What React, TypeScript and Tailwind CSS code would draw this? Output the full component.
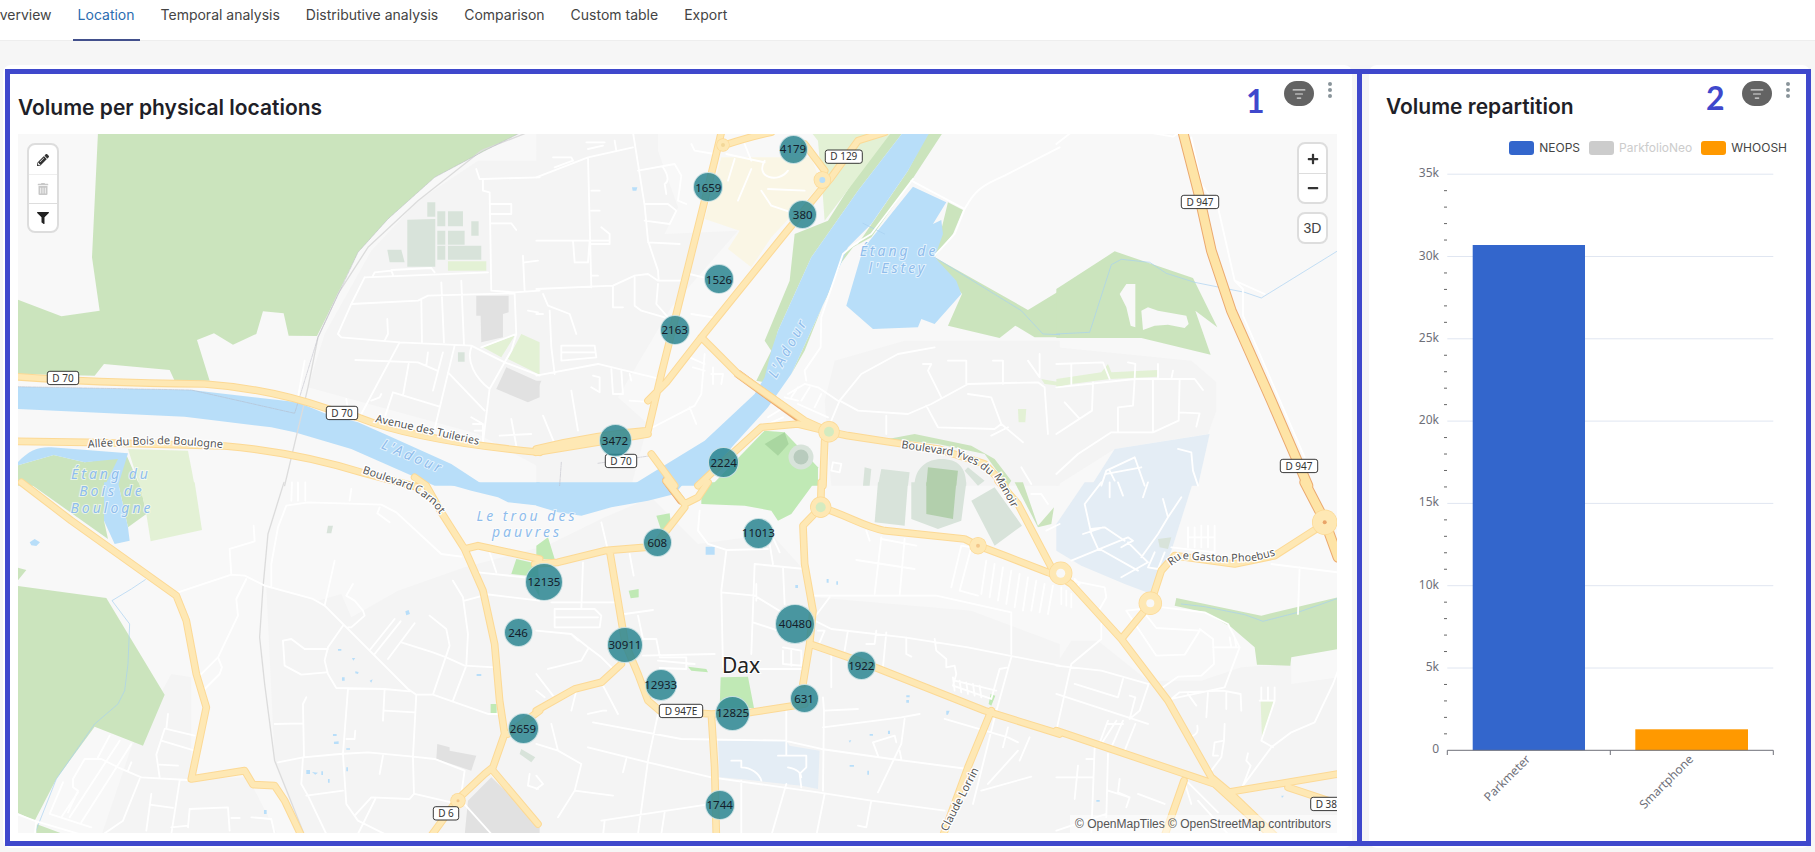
import type { SVGProps } from 'react'
import { ListFilter } from 'lucide-react'
import { FaFilter, FaMinus, FaPencilAlt, FaPlus, FaTrashAlt } from 'react-icons/fa'

// map shapes are traced in 3x tile coordinates, each tile has its page origin here
const TILES = {
  a: [18, 134],
  b: [538, 134],
  c: [1058, 134],
  d: [18, 484],
  e: [538, 484],
  f: [1058, 484],
} as const

type TileId = keyof typeof TILES
type Layer = { paint: SVGProps<SVGPathElement>; paths: Partial<Record<TileId, string>> }

const line = (stroke: string, strokeWidth: number): SVGProps<SVGPathElement> => ({
  fill: 'none',
  stroke,
  strokeWidth,
  strokeLinejoin: 'round',
  strokeLinecap: 'round',
})

const urban = {
  a: 'M1200,200 L1380,80 L1565,80 L1565,1000 L1380,900 L870,760 L920,600 L1060,350Z',
  b: 'M-5,-5 L360,-5 L360,50 L420,220 L380,300 L600,290 L400,520 L240,790 L330,870 L280,1055 L-5,1055Z M890,680 L1100,620 L1565,620 L1565,1055 L880,1055 L860,800Z',
  c: 'M-5,640 L400,680 L475,745 L475,830 L450,900 L170,945 L-5,1055Z',
  d: 'M745,310 L900,350 L970,330 L1000,400 L1140,320 L1340,250 L1565,190 L1565,1055 L860,1055 L770,830Z M460,570 L520,580 L520,885 L690,880 L780,1055 L250,1055 L340,790Z',
  e: 'M480,180 L700,150 L800,260 L830,340 L1300,380 L1565,480 L1565,1055 L-5,1055 L-5,200 L200,100 L340,40Z',
  f: 'M-5,540 L40,470 L120,470 L270,590 L430,590 L550,550 L700,540 L700,600 L840,580 L840,1055 L-5,1055Z',
}

const mainRoads = {
  a: 'M-5,728 C200,745 400,748 560,750 C700,760 830,790 930,825 L1020,850 C1120,890 1300,930 1565,955 M-5,922 L210,925 L620,936 C760,948 900,975 1040,1018 L1200,1060',
  b: 'M550,-5 L530,80 L410,560 L370,720 L330,890 C200,900 100,920 -5,945 M330,900 L-5,955 M340,960 L410,1055 M1040,-5 L960,20 L880,130 L740,300 L490,610 L385,745 L330,800 M555,35 C600,20 650,5 700,-5 M800,30 L860,110 M490,610 L600,720 L800,860 L873,893 L930,905 L1060,925 L1200,945 L1340,990 L1400,1055 M480,1055 L560,980 L670,880 L780,870 L873,893 M860,920 L855,1055',
  d: 'M10,-5 L160,110 L370,260 L475,335 L505,410 L535,570 L565,670 L520,885 L680,860 L705,902 L770,905 L800,950 L850,1055 M1190,-20 L1225,5 L1270,85 L1340,195 L1395,320 L1430,480 L1445,650 L1460,750 L1425,850 L1400,870 L1320,945 L1240,1055 M1340,195 L1380,185 L1565,225 M1470,750 L1565,680 M1425,860 L1560,1020',
  e: 'M-10,240 L60,235 L200,200 L320,190 L358,175 L440,70 M385,-10 L440,60 L480,40 L510,-5 M215,200 L245,380 L262,480 L300,570 L330,650 L365,680 L520,690 L640,685 L800,660 M520,690 L530,850 L535,1055 M850,-5 L848,70 L795,125 L800,240 L825,380 L815,480 L795,600 M815,480 L960,530 L1340,680 L1565,750 M848,70 C920,90 980,130 1040,140 L1280,165 L1320,185 L1400,215 L1530,265 L1565,280 M1380,-10 L1440,60 L1540,250 L1565,270 M1360,680 L1290,850 L1215,1055 M-5,680 L110,615 L190,595 L250,540',
  f: 'M510,925 L840,870 M690,910 L840,960 M-5,270 L40,300 L190,465 L330,650 L460,880 L520,930 L650,1055 M-5,740 L470,900 L640,1055 M378,890 L320,1055 M278,358 L190,465 M790,125 L650,215 L530,240 L350,215 L310,260 L278,358',
}

const trunk = {
  c: 'M375,-5 L420,170 L460,350 L520,530 L640,800 L750,1055',
  f: 'M740,-5 L800,110 L840,220',
}

const layers: Layer[] = [
  { paint: { fill: '#f4f4f4' }, paths: urban },
  {
    paint: { fill: '#faf6e5' },
    paths: { b: 'M550,70 L820,70 L850,150 L700,310 L640,400 L570,345 L605,290 L500,255Z' },
  },
  {
    paint: { fill: '#e4edf5' },
    paths: {
      c: 'M100,1055 L170,945 L455,900 L420,1055Z',
      e: 'M540,770 L745,770 L755,785 L845,800 L840,915 L790,905 L605,885 L545,880Z',
      f: 'M-5,120 L80,-5 L405,-5 L340,200 L280,330 L200,300 L70,245 L-5,200Z',
    },
  },
  // woods and grass
  {
    paint: { fill: '#cbe4bd' },
    paths: {
      a: 'M240,-5 L222,370 L245,530 L130,547 L-5,495 L-5,720 L230,725 L258,690 L455,708 L470,740 L575,740 L537,618 L588,598 L645,632 L715,600 L735,532 L797,538 L812,605 L897,606 L930,540 L1020,355 L1110,255 L1250,130 L1400,50 L1510,-5Z M-5,995 L107,963 L200,985 L327,967 L365,1055 L-5,1055Z',
      b: 'M1060,-5 L1020,25 L870,260 L770,300 L755,440 L680,620 L700,650 L655,740 L680,745 L720,590 L770,480 L820,370 L960,170 L1095,-5Z M1215,-5 L1170,-5 L1110,110 L960,330 L920,350 L870,480 L760,720 L720,790 L800,650 L900,400 L945,340 L1000,310 L1120,140Z M1230,205 L1275,228 L1245,300 L1190,370 L1470,528 L1565,470 L1565,610 L1490,610 L1432,575 L1385,612 L1230,575 L1272,480 L1190,370Z M1050,915 L1130,900 L1300,935 L1370,975 L1420,1040 L1410,1055 L1340,960 L1200,930Z',
      c: 'M-5,465 L170,352 L405,432 L478,580 L412,530 L458,662 L250,612 L-5,612Z',
      d: 'M-5,305 L265,342 L440,632 L375,785 L230,728 L115,885 L50,1010 L-5,985Z M-5,250 L25,258 L-5,295Z M30,-5 L270,165 L258,110 L260,-5Z M300,-5 L365,-5 L385,90 L330,130Z M55,1020 L135,1050 L55,1055Z',
      e: 'M1430,-5 L1500,130 L1540,120 L1548,70 L1500,125 L1455,-5Z',
      f: 'M355,342 L610,395 L840,340 L840,495 L700,520 L697,545 L597,542 L590,490 L520,430 L440,385 L350,365Z',
    },
  },
  {
    paint: { fill: '#f8f8f8' },
    paths: {
      c: 'M185,480 L205,450 L232,450 L232,580 L218,575 L205,520Z M250,530 L270,520 L300,530 L385,545 L392,570 L380,582 L330,572 L290,575 L255,588Z',
    },
  },
  {
    paint: { fill: '#e3f1d5' },
    paths: {
      a: 'M330,945 L510,950 L530,1055 L365,1055Z M1290,382 L1405,382 L1405,410 L1290,410Z M1395,640 L1490,605 L1450,670Z M1510,600 L1565,625 L1565,722 L1470,675Z',
      b: 'M820,-5 L1060,-5 L860,260 L855,190 L840,20Z M1510,735 L1565,745 L1565,755 L1520,750Z M1440,825 L1465,825 L1462,865 L1442,865Z',
      c: 'M-5,735 L130,715 L150,690 L160,715 L300,708 L300,728 L155,735 L40,750 L-5,760Z',
      d: 'M365,-5 L530,-5 L552,138 L398,172 L385,90Z',
      f: 'M608,652 L648,652 L612,765Z',
    },
  },
  {
    paint: { fill: '#c0e9b5' },
    paths: {
      b: 'M520,1055 L680,890 L740,895 L840,1000 L840,1055Z',
      d: 'M1480,270 L1495,225 L1560,240 L1565,340 L1530,275Z M1418,660 L1436,660 L1436,688 L1418,688Z',
      e: 'M490,30 L520,-5 L830,-5 L760,90 L720,110 L700,80 L620,65 L490,60Z M-5,225 L-5,185 L30,160 L50,225Z M355,95 L395,88 L400,130 L370,140Z M272,320 L302,315 L302,340 L278,343Z M450,548 L505,555 L510,565 L460,560Z M548,580 L630,578 L648,672 L545,672Z M1358,630 L1372,635 L1360,665 L1352,660Z',
    },
  },
  {
    paint: { fill: '#a9d6a0' },
    paths: { b: 'M680,930 L740,895 L752,930 L720,965Z' },
  },
  // river and ponds
  {
    paint: { fill: '#b8def9' },
    paths: {
      a: 'M-5,758 L520,768 L840,805 L925,840 L1020,865 L1100,900 L1300,990 L1400,1055 L1250,1055 L1000,945 L830,895 L760,880 L500,848 L-5,825Z M-5,990 C30,950 60,938 100,940 L330,958 L300,1055 L260,1055 L300,975 L200,985 L107,963 L-5,995Z',
      b: 'M1095,-5 L960,170 L820,370 L770,480 L720,590 L700,650 L680,730 L650,780 L500,920 L370,1000 L280,1055 L480,1055 L590,930 L690,820 L760,720 L870,480 L930,340 L1000,270 L1110,110 L1175,-5Z M1125,158 L1225,205 L1185,270 L1210,258 L1215,300 L1190,370 L1255,440 L1270,480 L1190,570 L1150,555 L1140,580 L1005,585 L925,515 L975,345Z M282,160 L298,160 L295,170 L284,170Z',
      d: 'M1270,-5 L1360,20 L1440,40 L1470,55 L1565,65 L1565,-5Z M258,-5 L258,110 L290,180 L335,170 L330,130 L300,-5Z M35,175 L50,165 L66,175 L55,186 L40,184Z M1162,382 L1172,378 L1176,390 L1165,394Z M1376,570 L1390,570 L1390,576 L1376,576Z M945,750 L956,750 L956,756 L945,756Z M948,773 L962,772 L962,780 L948,780Z M985,793 L996,793 L996,797 L985,797Z M865,858 L876,858 L876,870 L865,870Z M882,864 L900,866 L892,872Z M910,862 L915,862 L915,873 L910,873Z M930,885 L935,885 L935,896 L930,896Z M985,850 L990,850 L990,862 L985,862Z M960,495 L970,495 L970,500 L960,500Z M1002,522 L1012,522 L1006,530 Z M1012,562 L1022,564 L1020,570 L1012,568Z M972,580 L980,580 L980,590 L972,590Z M1055,590 L1064,586 L1060,596Z M738,978 L746,978 L746,990 L738,990Z',
      e: 'M-5,-5 L-5,65 L60,85 L130,95 L220,70 L330,50 L410,30 L440,-5Z M503,188 L530,188 L530,212 L503,212Z M772,303 L780,303 L780,312 L772,312Z M866,285 L872,285 L872,296 L866,296Z M895,292 L900,292 L900,302 L895,302Z M1105,634 L1115,634 L1115,640 L1105,640Z M1105,648 L1113,648 L1113,656 L1105,656Z M1225,680 L1235,680 L1230,692 L1225,692Z M995,750 L1005,750 L1005,755 L995,755Z M1050,740 L1056,740 L1056,750 L1050,750Z M932,770 L940,768 L936,776Z M935,843 L948,843 L948,848 L935,848Z M988,860 L993,860 L993,872 L988,872Z',
      f: 'M115,948 L125,948 L125,953 L115,953Z M670,935 L678,935 L672,942Z',
    },
  },
  // buildings
  {
    paint: { fill: '#d8e3da' },
    paths: {
      a: 'M1168,257 L1252,255 L1252,398 L1168,398Z M1228,205 L1252,205 L1252,248 L1228,248Z M1258,232 L1282,232 L1282,277 L1258,277Z M1290,232 L1335,232 L1335,277 L1290,277Z M1258,290 L1282,290 L1282,332 L1258,332Z M1258,335 L1282,335 L1282,377 L1258,377Z M1290,290 L1340,290 L1340,332 L1290,332Z M1290,335 L1390,335 L1390,377 L1290,377Z M1360,262 L1382,262 L1382,305 L1360,305Z M1108,347 L1150,347 L1160,385 L1115,385Z M1320,655 L1340,655 L1340,683 L1320,683Z',
      b: 'M1030,1005 L1115,1015 L1110,1055 L1020,1055Z M980,1000 L1000,1005 L995,1055 L975,1055Z M1130,1055 C1130,1000 1170,975 1210,975 C1260,975 1285,1000 1285,1055Z M1290,1000 L1340,1040 L1320,1055 L1280,1010Z',
      d: 'M930,125 L945,125 L940,148 L926,148Z M1510,795 L1552,820 L1540,835 L1505,810Z M1365,950 L1400,960 L1375,1005 L1352,995Z M1430,935 L1448,945 L1418,1005 L1402,1000Z',
      e: 'M1020,-5 L1110,-5 L1100,125 L1010,115Z M1120,-5 L1285,-5 L1270,110 L1200,135 L1120,105Z M1300,50 L1370,10 L1452,125 L1370,185Z',
      f: 'M300,165 L340,160 L330,195 L305,190Z',
    },
  },
  {
    paint: { fill: '#b2cfac' },
    paths: {
      b: 'M1170,1000 L1260,1010 L1255,1055 L1165,1055Z',
      e: 'M1165,-5 L1255,-5 L1245,105 L1165,90Z',
    },
  },
  {
    paint: { fill: '#e1e1e1' },
    paths: {
      a: 'M1375,485 L1472,485 L1472,535 L1455,540 L1455,610 L1390,625 L1388,545 L1375,545Z M1465,700 L1565,745 L1565,790 L1530,805 L1435,765Z',
      b: 'M-5,740 L10,740 L-5,775Z',
      d: 'M1258,780 L1295,790 L1295,800 L1375,815 L1360,860 L1255,825Z M1350,950 L1420,880 L1565,1020 L1565,1055 L1340,1055Z',
    },
  },
  // railway
  {
    paint: line('#dcdcdc', 4),
    paths: {
      a: 'M800,1055 L870,760 L900,610 L960,480 L1050,340 L1200,200 L1390,50 L1530,-5',
      d: 'M798,-5 L750,150 L735,310 L725,460 L740,600 L770,830 L860,1055',
    },
  },
  {
    paint: { ...line('#b4b5c0', 1.5), strokeDasharray: '9 3 2 3' },
    paths: {
      a: 'M-5,758 L520,768 L830,838 L900,610 L1020,355 L1110,255 L1250,130 L1400,50 L1510,-5',
      b: 'M70,985 L65,1055 M180,988 L340,965',
    },
  },
  // streams
  {
    paint: line('#a8d0f2', 2),
    paths: {
      b: 'M975,268 L1040,300 M1190,370 L1450,530 L1515,600 L1565,602',
      c: 'M-5,600 L95,595 L160,392 L190,376 L275,385 L325,418 L410,445 L560,475 L610,492 L840,350',
      d: 'M382,287 L340,315 L282,350 L335,420 L330,540 L320,620 L300,660 L230,720 L115,885 L50,1050',
      f: 'M370,360 L440,368 L560,392 L615,412 L720,385 L840,343',
    },
  },
  // minor streets
  {
    paint: line('#ffffff', 5.5),
    paths: {
      a: 'M1375,105 L1385,135 L1395,135 L1565,130 M1395,135 L1395,170 L1415,175 L1420,470 L1490,475 L1565,470 M1415,210 L1480,210 L1480,240 L1415,240 M1420,268 L1480,268 L1495,288 M1040,430 L1410,415 M1040,430 L1000,510 L1200,500 L1230,485 L1490,478 M1000,510 L960,600 L970,610 L1145,625 L1360,635 L1460,685 M1210,495 L1212,625 M1270,445 L1278,625 M1330,440 L1338,630 M1108,555 L1110,600 L1100,620 M1145,625 L1030,840 M1012,678 L1200,685 L1258,710 M1172,690 L1155,785 M1125,775 L1265,818 M1125,775 L1102,845 M1230,655 L1225,695 M1275,655 L1245,770 M1310,635 L1250,885 M1290,715 L1400,830 M1360,640 C1345,680 1370,730 1415,765 L1395,925 M1460,685 L1415,765 M1490,480 L1495,600 L1480,650 L1460,685 M1495,600 L1390,640 M1460,685 L1565,725 M1480,855 L1495,935 M1445,905 L1540,900 M1360,850 L1395,870 L1395,920 M1365,870 L1395,870 M1370,890 L1395,890 M1065,425 L1070,415 L1120,410 L1125,422 M1120,408 L1240,402 L1250,415 M1515,365 L1520,470 M1520,385 L1560,380 M1530,530 L1560,535 M840,790 L860,680 M1060,800 L1085,790 L1090,780 M985,795 L988,815',
      b: 'M-5,130 L150,70 L285,40 M45,70 L100,70 L105,80 L50,100 M150,70 L160,460 M145,25 L200,25 M150,45 L195,35 M230,20 L235,50 M285,-5 L320,215 L330,320 L360,410 L362,440 M160,170 L185,170 M160,230 L185,230 M160,425 L180,425 M320,210 L390,210 L415,230 L395,270 L320,260 M330,325 L425,330 M300,110 L410,90 L430,125 L420,200 L445,210 M375,100 C395,130 390,145 380,150 L385,180 M-5,320 L215,320 M105,320 L110,385 L150,385 L155,320 M190,280 L215,300 L215,330 L160,330 M-5,465 L225,455 L290,425 L330,420 L360,440 L435,440 M290,430 L290,515 L310,530 L380,550 M360,450 L355,510 L390,550 M225,455 L225,520 L255,520 M15,480 L30,515 L95,540 L115,600 M35,530 L40,640 L50,720 M-5,540 L15,540 M70,635 L170,635 L175,670 L70,680Z M70,655 L170,655 M-5,725 L180,690 L365,735 M165,725 L185,730 L185,775 L160,760 M220,705 L225,780 L255,780 L250,710 M275,720 L280,740 M100,770 L120,890 M15,845 L50,930 M275,800 L345,805 M345,880 L470,815 L490,780 L500,660 M455,820 L475,870 M460,540 L525,550 M455,420 L495,430 M455,670 L500,690 M465,700 L500,710 M520,720 L555,720 L550,750 M525,700 L525,750 M1120,140 L1280,225 C1310,170 1330,155 1400,125 L1565,40 M1280,225 L1250,300 L1190,365 M1125,135 L1000,300 L950,330 L915,360 L850,550 L848,640 L800,710 L805,740 M750,780 L800,750 L840,760 L900,800 M740,790 L780,800 M780,760 L760,790 M815,760 L790,800 M850,780 L830,820 M780,810 L870,850 M690,850 L730,825 M690,870 L735,850 M905,800 L880,860 M905,800 L970,720 L1080,660 L1190,640 M905,800 L960,830 L1110,840 L1180,810 L1290,750 L1500,745 L1520,760 L1530,900 M1155,690 L1180,690 L1170,710 L1210,790 M1230,680 L1285,680 L1285,750 M1365,680 L1395,680 L1395,750 M1470,680 L1505,730 L1505,660 M1165,815 L1200,880 L1370,885 L1390,870 L1360,790 L1290,780 M1390,870 L1455,925 M1360,905 L1410,880 M1045,845 L1045,900 M885,985 L910,990 L905,1015 L880,1010Z M1450,1000 L1480,1050 M460,30 L470,50 L530,60 M620,30 L640,80 M590,75 L570,140 M640,105 L600,200 M670,170 L700,215 L760,235 M690,165 L800,170 M680,80 C650,130 720,150 750,110 M565,60 L680,85',
      c: 'M-5,30 L40,-5 M270,-5 L345,8 L365,-5 M400,10 L430,150 L480,220 L530,440 L555,465 L555,545 L740,970 M530,440 L620,480 M-5,760 L230,735 L410,735 L435,768 M40,690 L40,750 M-5,690 L135,685 L155,735 M210,685 L232,690 L230,735 L225,815 L180,820 L180,895 M285,735 L285,895 M300,690 L300,730 M345,710 L340,735 M365,735 L362,860 L285,895 L160,895 L60,960 L-5,1020 M362,835 L425,838 L415,878 M105,745 L102,830 L-5,900 M65,855 L20,805 M130,1055 L145,1010 L230,970 L260,1055 M360,945 L400,955 L405,1010 L420,1055 M155,1010 L170,1040 M145,1020 L250,1000',
      d: 'M480,325 L640,272 L680,275 L740,305 L885,345 L920,365 L1170,615 L1195,632 L1245,632 L1410,690 L1440,690 M640,272 L635,195 L710,172 L707,125 M685,285 L655,345 L660,395 L600,520 L545,575 M600,520 L612,550 L605,570 L560,615 M760,305 L760,240 L780,130 L805,65 L870,55 L1090,62 L1135,85 L1270,210 L1330,218 M820,50 L822,-5 M862,50 L862,-5 M840,50 L840,-5 M995,50 L1000,15 M1085,70 L1078,88 L1115,115 M950,230 L920,365 M1005,300 L985,335 L1010,350 L1035,380 L1040,395 L1000,430 L990,430 M975,425 L930,490 L920,530 L930,570 L955,612 L1100,615 L1175,622 M930,495 L860,495 L820,465 L795,470 L800,545 L850,572 L925,565 M1130,405 L1058,495 M1148,412 L1070,510 M1190,418 L1110,525 M1150,475 L1245,505 L1285,520 L1340,545 L1430,550 M1235,395 L1285,435 L1295,485 L1245,632 M1305,290 L1335,340 L1350,450 L1345,545 L1305,650 M1395,335 L1340,350 M1400,330 L1565,350 M1380,265 L1565,285 M1415,205 L1435,265 M1100,615 L1095,710 M1100,680 L1190,685 M1195,632 L1185,820 L1188,930 L1175,945 L1060,940 L1010,995 M865,640 L855,660 L858,820 M770,720 L855,718 M780,835 L855,820 L965,810 L1050,805 L1185,818 L1250,825 L1340,860 L1330,930 M990,615 L975,810 L985,960 L1020,1010 L1110,1055 M975,920 L865,935 M855,820 L850,900 L870,935 L925,1050 M1095,815 L1085,870 M985,765 L1010,765 L1012,740 M1190,930 L1300,955 M1072,945 L1020,1050 M450,690 L445,735 L530,755 M440,735 L415,812 L425,880 M430,770 L530,800 M425,842 L480,845 M370,880 L510,888 M485,890 L460,1050 M365,885 L315,1010 L250,1055 M400,930 L385,1040 M395,962 L465,972 M510,1030 L515,975 L630,970 L635,1040 M460,1030 L510,1025 M640,1002 L665,1002 M700,1000 L760,1005 L770,1050 M370,880 L300,850 L250,825 L200,825 L165,885 L165,910 L180,920 L150,985 M275,755 L240,820 M305,770 L155,1000 M340,780 L190,1015 M135,895 L95,990 L220,1030 M340,835 L330,860 M180,925 L130,1000 M-5,990 L55,1012 L200,1055 M55,1012 L50,1055 M1420,870 L1560,1020 M1535,870 L1530,905 L1560,915 M1330,950 L1420,1050',
      e: 'M190,115 L210,200 M275,210 L287,275 M135,235 L130,375 M40,355 L230,355 M50,375 L170,375 L190,395 L185,430 L50,430Z M50,400 L180,400 M-5,440 L100,450 L150,490 L190,520 L230,560 M100,450 L120,470 M150,495 L130,530 L30,555 M260,390 L345,378 M300,395 L315,465 L355,465 L365,515 M315,515 L530,510 M365,520 L445,520 L445,555 L365,552 M470,540 L360,530 M-5,570 L45,635 M-5,620 L20,640 M190,595 L240,690 M150,690 L195,680 L205,680 M115,620 L100,680 M165,715 L430,765 L740,770 L850,795 L1060,825 L1290,855 M360,690 L330,830 L300,1050 M150,790 L330,835 L520,880 L840,925 L1000,950 L1220,980 M265,825 L255,865 M130,840 L110,920 L225,935 M110,920 L60,1000 M-5,875 L15,900 L-5,915 M-5,780 L60,800 L130,840 M40,720 L60,800 M190,1010 L520,960 M380,985 L370,1050 M200,1010 L195,1055 M610,890 L610,1050 M745,900 L700,1055 M860,930 L835,1055 M1000,950 L985,1030 L960,1025 M565,200 L550,320 L555,550 M550,325 L650,335 L740,390 M650,240 L640,510 M650,240 L800,255 M735,250 L740,360 M645,415 L720,440 M700,150 L725,205 M695,180 L705,240 M485,80 L480,140 L510,180 L565,198 L690,195 M655,300 L655,350 M830,335 L1195,335 L1420,385 L1420,510 M875,340 L830,400 M830,410 L880,435 L1100,460 L1290,490 L1565,545 M735,500 L735,540 L790,545 L790,500 L735,490 M760,500 L760,545 M660,555 L790,555 M840,440 L860,440 L845,475 M930,440 L920,500 M1015,440 L1010,480 L985,480 M1045,445 L1035,550 M880,510 L880,610 M1105,460 L1105,510 L1120,518 M1190,465 L1195,500 L1225,525 L1225,550 L1250,545 L1255,570 L1245,605 L1360,645 L1385,555 L1410,550 M1250,590 L1375,620 M1030,160 L1010,330 M1100,165 L1085,335 M1030,165 L1135,185 M955,228 L1130,255 M985,140 L995,170 M855,640 L858,680 L855,920 M860,680 L960,675 M855,730 L1090,700 L1145,690 M1100,705 L1090,780 L1020,925 M1005,775 L1070,755 L1075,775 M1005,775 L1020,815 M1085,800 L1090,825 M745,680 L745,770 M1345,230 L1330,330 M1370,240 L1355,340 M1395,250 L1380,350 M1420,260 L1405,360 M1445,270 L1430,370 M1470,280 L1455,380 M1495,290 L1480,380 M1520,300 L1505,385 M1545,305 L1530,390 M1240,310 L1270,185 L1300,190 L1265,320 L1320,335 M1420,520 L1370,700 L1305,960 M1220,705 L1410,760 L1440,775 M1410,730 L1395,790 M1475,760 L1445,830 M1330,920 L1480,878 M1440,800 L1350,900 M580,830 L610,830 L610,850 C640,850 665,870 670,890 M720,815 L805,815 L805,850 L785,870 L790,910 M750,850 C780,855 790,870 790,880 M745,775 L745,815 M1480,30 L1510,30 L1530,60 M1525,140 L1565,120 M1245,580 L1250,620 M1265,590 L1270,625 M1285,595 L1290,630 M1305,600 L1310,635 M1325,605 L1330,640',
      f: 'M40,290 L140,310 L145,340 L125,375 M50,285 L65,300 L50,310 M10,310 L10,360 M25,320 L25,365 M40,330 L40,370 M130,420 L130,465 L40,540 L-5,740 M-5,545 L130,560 L270,600 M50,600 L180,640 L195,585 M-5,630 L270,720 M215,635 L232,640 L215,705 L245,680 M272,600 L245,680 M205,380 L250,375 M205,380 L295,515 L380,512 L425,440 L295,432 L250,375 M425,435 L465,465 L468,540 L430,575 L360,578 L315,610 M315,370 L440,385 L510,420 L545,490 L500,610 L340,645 L365,625 L495,620 L548,630 L550,680 M390,630 L415,665 M450,625 L445,700 M505,625 L505,675 M465,490 L545,490 M515,460 L520,490 M530,460 L535,490 M400,758 C420,750 420,740 418,725 M500,720 L498,770 L470,775 L465,815 L480,815 M498,770 L490,820 L460,860 M570,808 L565,830 L578,845 L555,905 L640,790 L700,745 L770,715 L825,600 L840,560 M610,770 L650,650 L605,650 M610,650 L610,610 M630,650 L630,610 M650,650 L650,610 M610,770 L645,790 M150,720 L195,720 M175,710 L130,780 M195,710 L160,790 M232,720 L200,800 M150,710 L120,790 M110,790 L100,1050 M150,810 L145,1000 M85,825 L105,825 M60,845 L50,945 M-5,880 L105,880 M185,885 L180,925 L215,940 L205,970 M150,920 L215,940 M240,930 L320,960 M145,990 L-5,1040 M640,240 L840,265 M725,250 L720,390 M390,130 L390,190 M410,130 L410,190 M430,125 L430,190 M450,125 L450,190 M470,125 L470,205 M390,160 L470,160 M340,190 L470,205 M380,895 L400,960 M390,895 L480,985 M130,-5 L80,60 L100,150 L120,195 M100,135 L140,130 L200,170 M75,150 L135,130 M40,230 L210,160 L225,170 L190,190 M210,175 L270,235 L190,280 M125,195 L240,260 M155,-5 L155,40 M180,-5 L195,35 M270,-5 L255,40 M315,45 L330,100 L370,40 M330,100 L300,150 L250,220 M290,205 L270,250 L300,255 L320,205 M420,950 L510,1050',
    },
  },
  // main roads: orange edge of the trunk road and bridges, then casing, then fill
  {
    paint: line('#eba96f', 32),
    paths: {
      ...trunk,
    },
  },
  {
    paint: line('#eba96f', 25),
    paths: {
      b: 'M600,720 L780,850',
      e: 'M385,-10 L430,50',
    },
  },
  { paint: line('#fcd995', 23), paths: mainRoads },
  { paint: line('#fee8b4', 17), paths: mainRoads },
  { paint: line('#fee4a6', 26), paths: trunk },
]

// page coordinates from here on
const rings = [
  { x: 820.7, y: 507.3, r: 10, hole: 5, fill: '#d4ebc0' },
  { x: 978, y: 545.7, r: 8, hole: 2, fill: '#f3c78b' },
  { x: 829, y: 431.7, r: 10, hole: 5, fill: '#d4ebc0' },
  { x: 822.3, y: 180, r: 8, hole: 3, fill: '#b8def9' },
  { x: 723, y: 145, r: 6, hole: 2, fill: '#f3d798' },
  { x: 1060.7, y: 573.3, r: 11, hole: 4.5, fill: '#f8f8f8' },
  { x: 1150.3, y: 603.3, r: 11, hole: 4, fill: '#f8f8f8' },
  { x: 1324.7, y: 522.3, r: 12, hole: 2, fill: '#e9a468' },
  { x: 458, y: 800.7, r: 7, hole: 1.5, fill: '#f3c78b' },
]

const shields = [
  { label: 'D 129', x: 825.3, y: 150, w: 37 },
  { label: 'D 947', x: 1181.3, y: 195.3, w: 37.4 },
  { label: 'D 947', x: 1280.3, y: 459.3, w: 37.4 },
  { label: 'D 70', x: 47.3, y: 371.3, w: 31.4 },
  { label: 'D 70', x: 326.3, y: 406.3, w: 31.4 },
  { label: 'D 70', x: 605.3, y: 454.3, w: 31.4 },
  { label: 'D 947E', x: 659.3, y: 704.3, w: 43.4 },
  { label: 'D 6', x: 433.3, y: 806.7, w: 25.4 },
  { label: 'D 38', x: 1310.7, y: 797.3, w: 31.4 },
]

const roadLabels = [
  { id: 'r1', label: 'Allée du Bois de Boulogne', d: 'M88,448 L130,445 L170,444 L225,448' },
  { id: 'r2', label: 'Avenue des Tuileries', d: 'M375,422 L483,446' },
  { id: 'r3', label: 'Boulevard Carnot', d: 'M362,473 L400,486 L418,493 L432,504 L446,522' },
  { id: 'r4', label: 'Boulevard Yves du Manoir', d: 'M901,448 L955,456 L978,466 L996,480 L1010,504 L1022,530' },
  { id: 'r5', label: 'Rue Gaston Phoebus', d: 'M1171,566 L1181,559 L1225,562 L1255,561 L1285,553' },
  { id: 'r6', label: 'Claude Lorrin', d: 'M947,832 L984,760' },
]

const waterLabels = [
  { label: 'Étang du', x: 111, y: 479 },
  { label: 'Bois de', x: 112, y: 496 },
  { label: 'Boulogne', x: 112, y: 513 },
  { label: 'Le trou des', x: 527, y: 521 },
  { label: 'pauvres', x: 527, y: 537 },
  { label: 'Étang de', x: 899, y: 256 },
  { label: "l'Estey", x: 898, y: 273 },
]

const markers = [
  { n: 4179, x: 793, y: 149, r: 14.5 },
  { n: 1659, x: 708.3, y: 187.3, r: 15 },
  { n: 380, x: 802.7, y: 214.3, r: 14.5 },
  { n: 1526, x: 719, y: 279.3, r: 15 },
  { n: 2163, x: 674.7, y: 329.7, r: 15 },
  { n: 3472, x: 615, y: 440.3, r: 16.5 },
  { n: 2224, x: 723.7, y: 462.3, r: 15.5 },
  { n: 608, x: 657.3, y: 542.3, r: 14.5 },
  { n: 11013, x: 758.3, y: 533, r: 15.5 },
  { n: 12135, x: 544, y: 581.7, r: 19 },
  { n: 246, x: 518, y: 632.3, r: 14.5 },
  { n: 30911, x: 625, y: 644.7, r: 18 },
  { n: 40480, x: 795.3, y: 624, r: 20 },
  { n: 1922, x: 861.3, y: 665.3, r: 14.5 },
  { n: 12933, x: 660.7, y: 685, r: 16 },
  { n: 631, x: 804, y: 698.3, r: 14.5 },
  { n: 12825, x: 732.7, y: 713, r: 17.5 },
  { n: 2659, x: 523, y: 728.3, r: 15.5 },
  { n: 1744, x: 719.7, y: 805, r: 15 },
]

const tabs = ['Overview', 'Location', 'Temporal analysis', 'Distributive analysis', 'Comparison', 'Custom table', 'Export']

function CardActions() {
  return (
    <div className="flex items-start gap-[9px]">
      <button className="flex h-[25px] w-[30px] items-center justify-center rounded-full bg-[#636363]">
        <ListFilter className="h-[14px] w-[14px] text-[#dddddd]" strokeWidth={2} />
      </button>
      <div className="flex h-[18px] w-[14px] flex-col items-center justify-between py-[1px]">
        <span className="h-1 w-1 rounded-full bg-[#89949a]" />
        <span className="h-1 w-1 rounded-full bg-[#89949a]" />
        <span className="h-1 w-1 rounded-full bg-[#89949a]" />
      </div>
    </div>
  )
}

function MapBase() {
  return (
    <svg viewBox="18 134 1319 699" className="block h-full w-full">
      {layers.map((layer, i) =>
        (Object.keys(layer.paths) as TileId[]).map((t) => (
          <path
            key={`${i}-${t}`}
            d={layer.paths[t]}
            transform={`translate(${TILES[t][0]} ${TILES[t][1]}) scale(0.3333)`}
            {...layer.paint}
          />
        )),
      )}

      {rings.map((ring) => (
        <g key={`${ring.x}-${ring.y}`}>
          <circle cx={ring.x} cy={ring.y} r={ring.r + 0.7} fill="#fcd995" />
          <circle cx={ring.x} cy={ring.y} r={ring.r} fill="#fee8b4" />
          <circle cx={ring.x} cy={ring.y} r={ring.hole} fill={ring.fill} />
        </g>
      ))}

      <circle cx={801} cy={457} r={12.5} fill="#d8e3da" />
      <circle cx={801} cy={457} r={7.5} fill="#b8cbbd" />

      <g className="font-['Noto_Sans',sans-serif] text-[11px]" fill="#555555" stroke="#ffffff" strokeWidth={2.5} paintOrder="stroke">
        {roadLabels.map((road) => (
          <g key={road.id}>
            <path id={road.id} d={road.d} fill="none" stroke="none" />
            <text>
              <textPath href={`#${road.id}`}>{road.label}</textPath>
            </text>
          </g>
        ))}
      </g>

      <g className="font-['Noto_Sans',sans-serif] text-[14px] italic tracking-[3px]" fill="#8fbdec" stroke="#ffffff" strokeOpacity={0.6} strokeWidth={2} paintOrder="stroke" textAnchor="middle">
        {waterLabels.map((water) => (
          <text key={water.label} x={water.x} y={water.y}>
            {water.label}
          </text>
        ))}
        <text transform="translate(411 461) rotate(23)">L'Adour</text>
        <text transform="translate(792 350) rotate(-61)">L'Adour</text>
      </g>

      <text x={741} y={673} textAnchor="middle" fill="#222222" stroke="#ffffff" strokeWidth={2} paintOrder="stroke" className="font-['Noto_Sans',sans-serif] text-[21px]">
        Dax
      </text>

      {shields.map((shield) => (
        <g key={`${shield.label}-${shield.x}`} className="font-['Noto_Sans',sans-serif] text-[10px]">
          <rect x={shield.x} y={shield.y} width={shield.w} height={13.3} rx={2.5} fill="#ffffff" stroke="#222222" strokeWidth={0.9} />
          <text x={shield.x + shield.w / 2} y={shield.y + 10.2} textAnchor="middle" fill="#333333">
            {shield.label}
          </text>
        </g>
      ))}
    </svg>
  )
}

function MapPanel() {
  return (
    <div className="relative h-[699px] w-full overflow-hidden bg-[#f8f8f8]">
      <MapBase />

      {markers.map((m) => (
        <div
          key={m.n}
          className="absolute flex items-center justify-center rounded-full border border-white/70 bg-[#2a8591]/85 font-['Noto_Sans',sans-serif] text-[11.5px] text-[#14202b]"
          style={{ left: m.x - 18 - m.r, top: m.y - 134 - m.r, width: m.r * 2, height: m.r * 2 }}
        >
          {m.n}
        </div>
      ))}

      <div className="absolute left-[9px] top-[9px] flex w-[32px] flex-col overflow-hidden rounded-lg border-2 border-[#dddddd] bg-white">
        <button className="flex h-[29px] items-center justify-center">
          <FaPencilAlt className="h-3 w-3 text-[#333333]" />
        </button>
        <button className="flex h-[29px] items-center justify-center border-t border-[#eeeeee]">
          <FaTrashAlt className="h-3 w-3 text-[#c8c8c8]" />
        </button>
        <button className="flex h-[28px] items-center justify-center border-t border-[#dddddd]">
          <FaFilter className="h-3 w-3 text-[#222222]" />
        </button>
      </div>

      <div className="absolute right-[9px] top-[8px] flex w-[31px] flex-col gap-[8px]">
        <div className="flex flex-col rounded-lg border-2 border-[#dddddd] bg-white">
          <button className="flex h-[29px] items-center justify-center">
            <FaPlus className="h-3 w-3 text-[#333333]" />
          </button>
          <button className="flex h-[29px] items-center justify-center border-t border-[#dddddd]">
            <FaMinus className="h-3 w-3 text-[#333333]" />
          </button>
        </div>
        <button className="flex h-[32px] items-center justify-center rounded-lg border-2 border-[#dddddd] bg-white font-['Liberation_Sans',sans-serif] text-[14px] text-[#444444]">
          3D
        </button>
      </div>

      <div className="absolute bottom-0 right-0 flex h-[18px] items-center bg-white/50 pl-[5px] pr-[6px] font-['Liberation_Sans',sans-serif] text-[12px] text-[#555555]">
        © OpenMapTiles © OpenStreetMap contributors
      </div>
    </div>
  )
}

const AXIS_BOTTOM = 750.3
const STEP = 82.3
const yLabels = ['0', '5k', '10k', '15k', '20k', '25k', '30k', '35k']

function BarChart() {
  return (
    <svg viewBox="1369 160 441 680" className="block h-[680px] w-[441px] font-['Noto_Sans',sans-serif] text-[12px]">
      {yLabels.map((label, i) => {
        const y = AXIS_BOTTOM - i * STEP
        return (
          <g key={label}>
            {i > 0 && <line x1={1447.3} x2={1773.3} y1={y} y2={y} stroke="#e0e6f1" />}
            <text x={1439} y={y + 3} textAnchor="end" fill="#6e7079">
              {label}
            </text>
            {i < 7 &&
              [1, 2, 3, 4].map((k) => (
                <line key={k} x1={1444} x2={1447} y1={y - (k * STEP) / 5} y2={y - (k * STEP) / 5} stroke="#666666" />
              ))}
          </g>
        )
      })}

      <rect x={1472.7} y={245} width={112.3} height={505.3} fill="#3366cc" />
      <rect x={1635.3} y={729.3} width={112.7} height={21} fill="#ff9900" />

      <path d="M1447.3,755 V750.3 H1773.3 V755 M1610.3,750.3 V755" fill="none" stroke="#6e7079" strokeWidth={1} />

      <text transform="translate(1531 760) rotate(-45)" textAnchor="end" fill="#6e7079">
        Parkmeter
      </text>
      <text transform="translate(1694 760) rotate(-45)" textAnchor="end" fill="#6e7079">
        Smartphone
      </text>
    </svg>
  )
}

export default function App() {
  return (
    <div className="relative h-[852px] w-full overflow-hidden bg-[#f6f6f6] font-['Inter',sans-serif]">
      <nav className="ml-[-16px] flex h-[41px] items-center gap-[16px] border-b border-[#eeeeee] bg-white">
        {tabs.map((tab) => (
          <a
            key={tab}
            className={`flex h-[41px] items-center border-b-2 px-[5px] pb-[9px] text-[14px] ${
              tab === 'Location' ? 'border-[#42508c] text-[#2b6cb0]' : 'border-transparent text-[#444444]'
            }`}
          >
            {tab}
          </a>
        ))}
      </nav>

      <main className="flex items-start gap-[17px] pl-[3px] pt-[24px]">
        <section className="w-[1349px] rounded-lg bg-white px-[15px] pb-[15px]">
          <header className="flex h-[69px] items-start justify-between pt-[16px]">
            <h2 className="mt-[13px] text-[21px] font-semibold leading-[28px] text-[#1f1f28]">Volume per physical locations</h2>
            <CardActions />
          </header>
          <MapPanel />
        </section>

        <section className="h-[783px] w-[441px] rounded-lg bg-white">
          <header className="flex h-[69px] items-start justify-between pl-[17px] pr-[15px] pt-[16px]">
            <h2 className="mt-[12px] text-[21px] font-semibold leading-[28px] text-[#1f1f28]">Volume repartition</h2>
            <CardActions />
          </header>
          <div className="flex h-[26px] items-start justify-end gap-[9px] pr-[23px] pt-[5px] text-[12px]">
            <span className="flex items-center gap-[5px] text-[#444444]">
              <i className="h-[14px] w-[25px] rounded-[3px] bg-[#3366cc]" />
              NEOPS
            </span>
            <span className="flex items-center gap-[5px] text-[#cccccc]">
              <i className="h-[14px] w-[25px] rounded-[3px] bg-[#cccccc]" />
              ParkfolioNeo
            </span>
            <span className="flex items-center gap-[5px] text-[#444444]">
              <i className="h-[14px] w-[25px] rounded-[3px] bg-[#ff9900]" />
              WHOOSH
            </span>
          </div>
          <BarChart />
        </section>
      </main>

      {/* review annotations drawn on top of the screenshot */}
      <div className="pointer-events-none absolute left-[5px] top-[69px] h-[777px] w-[1357px] border-[5px] border-[#3f48cc]" />
      <div className="pointer-events-none absolute left-[1357px] top-[69px] h-[777px] w-[454px] border-[5px] border-[#3f48cc]" />
      <span className="absolute left-[1246px] top-[82px] font-['Lato',sans-serif] text-[32px] font-bold leading-[38px] text-[#3f48cc]">1</span>
      <span className="absolute left-[1706px] top-[79px] font-['Lato',sans-serif] text-[32px] font-bold leading-[38px] text-[#3f48cc]">2</span>
    </div>
  )
}
